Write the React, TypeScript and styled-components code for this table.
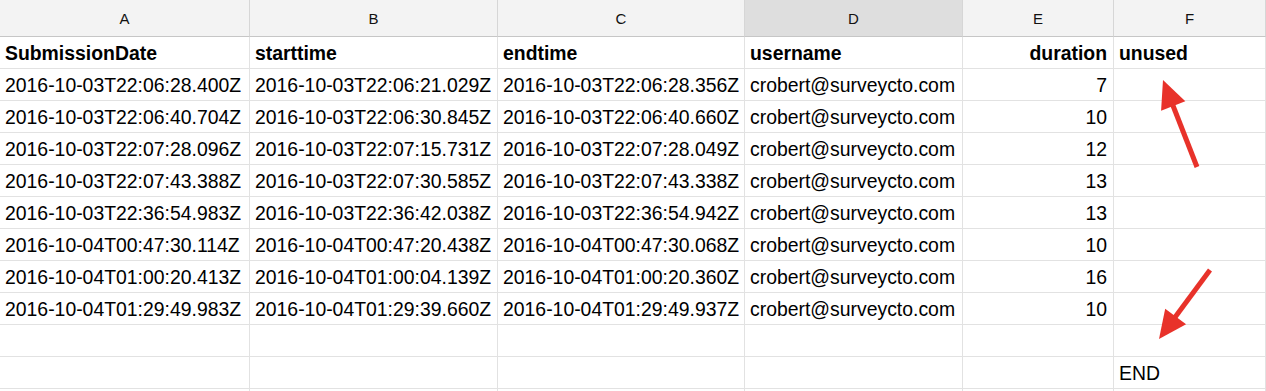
import React from "react";
import styled, { createGlobalStyle } from "styled-components";

const GlobalStyle = createGlobalStyle`
  html, body {
    margin: 0;
    padding: 0;
    background: #ffffff;
  }
  body {
    font-family: "Liberation Sans", Arial, Helvetica, sans-serif;
    overflow: hidden;
  }
`;

const COLS = [250, 248, 247, 218, 151, 152];
const LETTERS = ["A", "B", "C", "D", "E", "F"];

const Wrapper = styled.div`
  position: relative;
  width: 1266px;
  height: 391px;
  overflow: hidden;
  background: #fff;
`;

const Grid = styled.div`
  display: grid;
  grid-template-columns: ${COLS.map((c) => `${c}px`).join(" ")};
  grid-auto-rows: 32px;
  grid-template-rows: 37px;
`;

const ColumnHeader = styled.div<{ $selected?: boolean }>`
  box-sizing: border-box;
  display: flex;
  align-items: center;
  justify-content: center;
  padding-top: 1px;
  background: ${(p) => (p.$selected ? "#dedede" : "#f3f3f3")};
  border-right: 1px solid #d6d6d6;
  border-bottom: 1px solid #c6c6c6;
  font-family: "Liberation Sans", Arial, sans-serif;
  font-size: 15px;
  color: #111;
`;

const Cell = styled.div<{ $align?: "left" | "right"; $bold?: boolean }>`
  box-sizing: border-box;
  border-right: 1px solid #e2e2e2;
  border-bottom: 1px solid #e2e2e2;
  padding: 0 ${(p) => (p.$align === "right" ? "6px" : "4px")} 0 5px;
  text-align: ${(p) => p.$align ?? "left"};
  font-family: "Liberation Sans", Arial, sans-serif;
  font-size: 19.4px;
  line-height: 32px;
  font-weight: ${(p) => (p.$bold ? 700 : 400)};
  color: #000;
  white-space: nowrap;
  overflow: hidden;
`;

const Annotations = styled.svg`
  position: absolute;
  left: 0;
  top: 0;
  pointer-events: none;
`;

const ARROW = "#e8322a";

type Arrow = { tail: [number, number]; tip: [number, number] };

const Pointer: React.FC<Arrow> = ({ tail, tip }) => {
  const dx = tip[0] - tail[0];
  const dy = tip[1] - tail[1];
  const len = Math.hypot(dx, dy);
  const ux = dx / len;
  const uy = dy / len;
  const headLen = 28;
  const half = 13;
  const bx = tip[0] - headLen * ux;
  const by = tip[1] - headLen * uy;
  const nx = -uy;
  const ny = ux;
  const pts = `${tip[0]},${tip[1]} ${bx + half * nx},${by + half * ny} ${bx - half * nx},${by - half * ny}`;
  return (
    <g>
      <line
        x1={tail[0]}
        y1={tail[1]}
        x2={bx + ux * 2}
        y2={by + uy * 2}
        stroke={ARROW}
        strokeWidth={5}
      />
      <polygon points={pts} fill={ARROW} />
    </g>
  );
};

const headers = ["SubmissionDate", "starttime", "endtime", "username", "duration", "unused"];

const rows: string[][] = [
  ["2016-10-03T22:06:28.400Z", "2016-10-03T22:06:21.029Z", "2016-10-03T22:06:28.356Z", "crobert@surveycto.com", "7", ""],
  ["2016-10-03T22:06:40.704Z", "2016-10-03T22:06:30.845Z", "2016-10-03T22:06:40.660Z", "crobert@surveycto.com", "10", ""],
  ["2016-10-03T22:07:28.096Z", "2016-10-03T22:07:15.731Z", "2016-10-03T22:07:28.049Z", "crobert@surveycto.com", "12", ""],
  ["2016-10-03T22:07:43.388Z", "2016-10-03T22:07:30.585Z", "2016-10-03T22:07:43.338Z", "crobert@surveycto.com", "13", ""],
  ["2016-10-03T22:36:54.983Z", "2016-10-03T22:36:42.038Z", "2016-10-03T22:36:54.942Z", "crobert@surveycto.com", "13", ""],
  ["2016-10-04T00:47:30.114Z", "2016-10-04T00:47:20.438Z", "2016-10-04T00:47:30.068Z", "crobert@surveycto.com", "10", ""],
  ["2016-10-04T01:00:20.413Z", "2016-10-04T01:00:04.139Z", "2016-10-04T01:00:20.360Z", "crobert@surveycto.com", "16", ""],
  ["2016-10-04T01:29:49.983Z", "2016-10-04T01:29:39.660Z", "2016-10-04T01:29:49.937Z", "crobert@surveycto.com", "10", ""],
  ["", "", "", "", "", ""],
  ["", "", "", "", "", "END"],
  ["", "", "", "", "", ""],
];

export default function App() {
  return (
    <>
      <GlobalStyle />
      <Wrapper>
        <Grid>
          {LETTERS.map((l) => (
            <ColumnHeader key={l} $selected={l === "D"}>
              {l}
            </ColumnHeader>
          ))}
          {headers.map((h, i) => (
            <Cell key={h} $bold $align={i === 4 ? "right" : "left"}>
              {h}
            </Cell>
          ))}
          {rows.map((r, ri) =>
            r.map((v, ci) => (
              <Cell key={`${ri}-${ci}`} $align={ci === 4 ? "right" : "left"}>
                {v}
              </Cell>
            ))
          )}
        </Grid>
        <Annotations width={1266} height={391} viewBox="0 0 1266 391">
          <Pointer tail={[1197, 167]} tip={[1163, 80]} />
          <Pointer tail={[1210, 270]} tip={[1159, 339]} />
        </Annotations>
      </Wrapper>
    </>
  );
}
